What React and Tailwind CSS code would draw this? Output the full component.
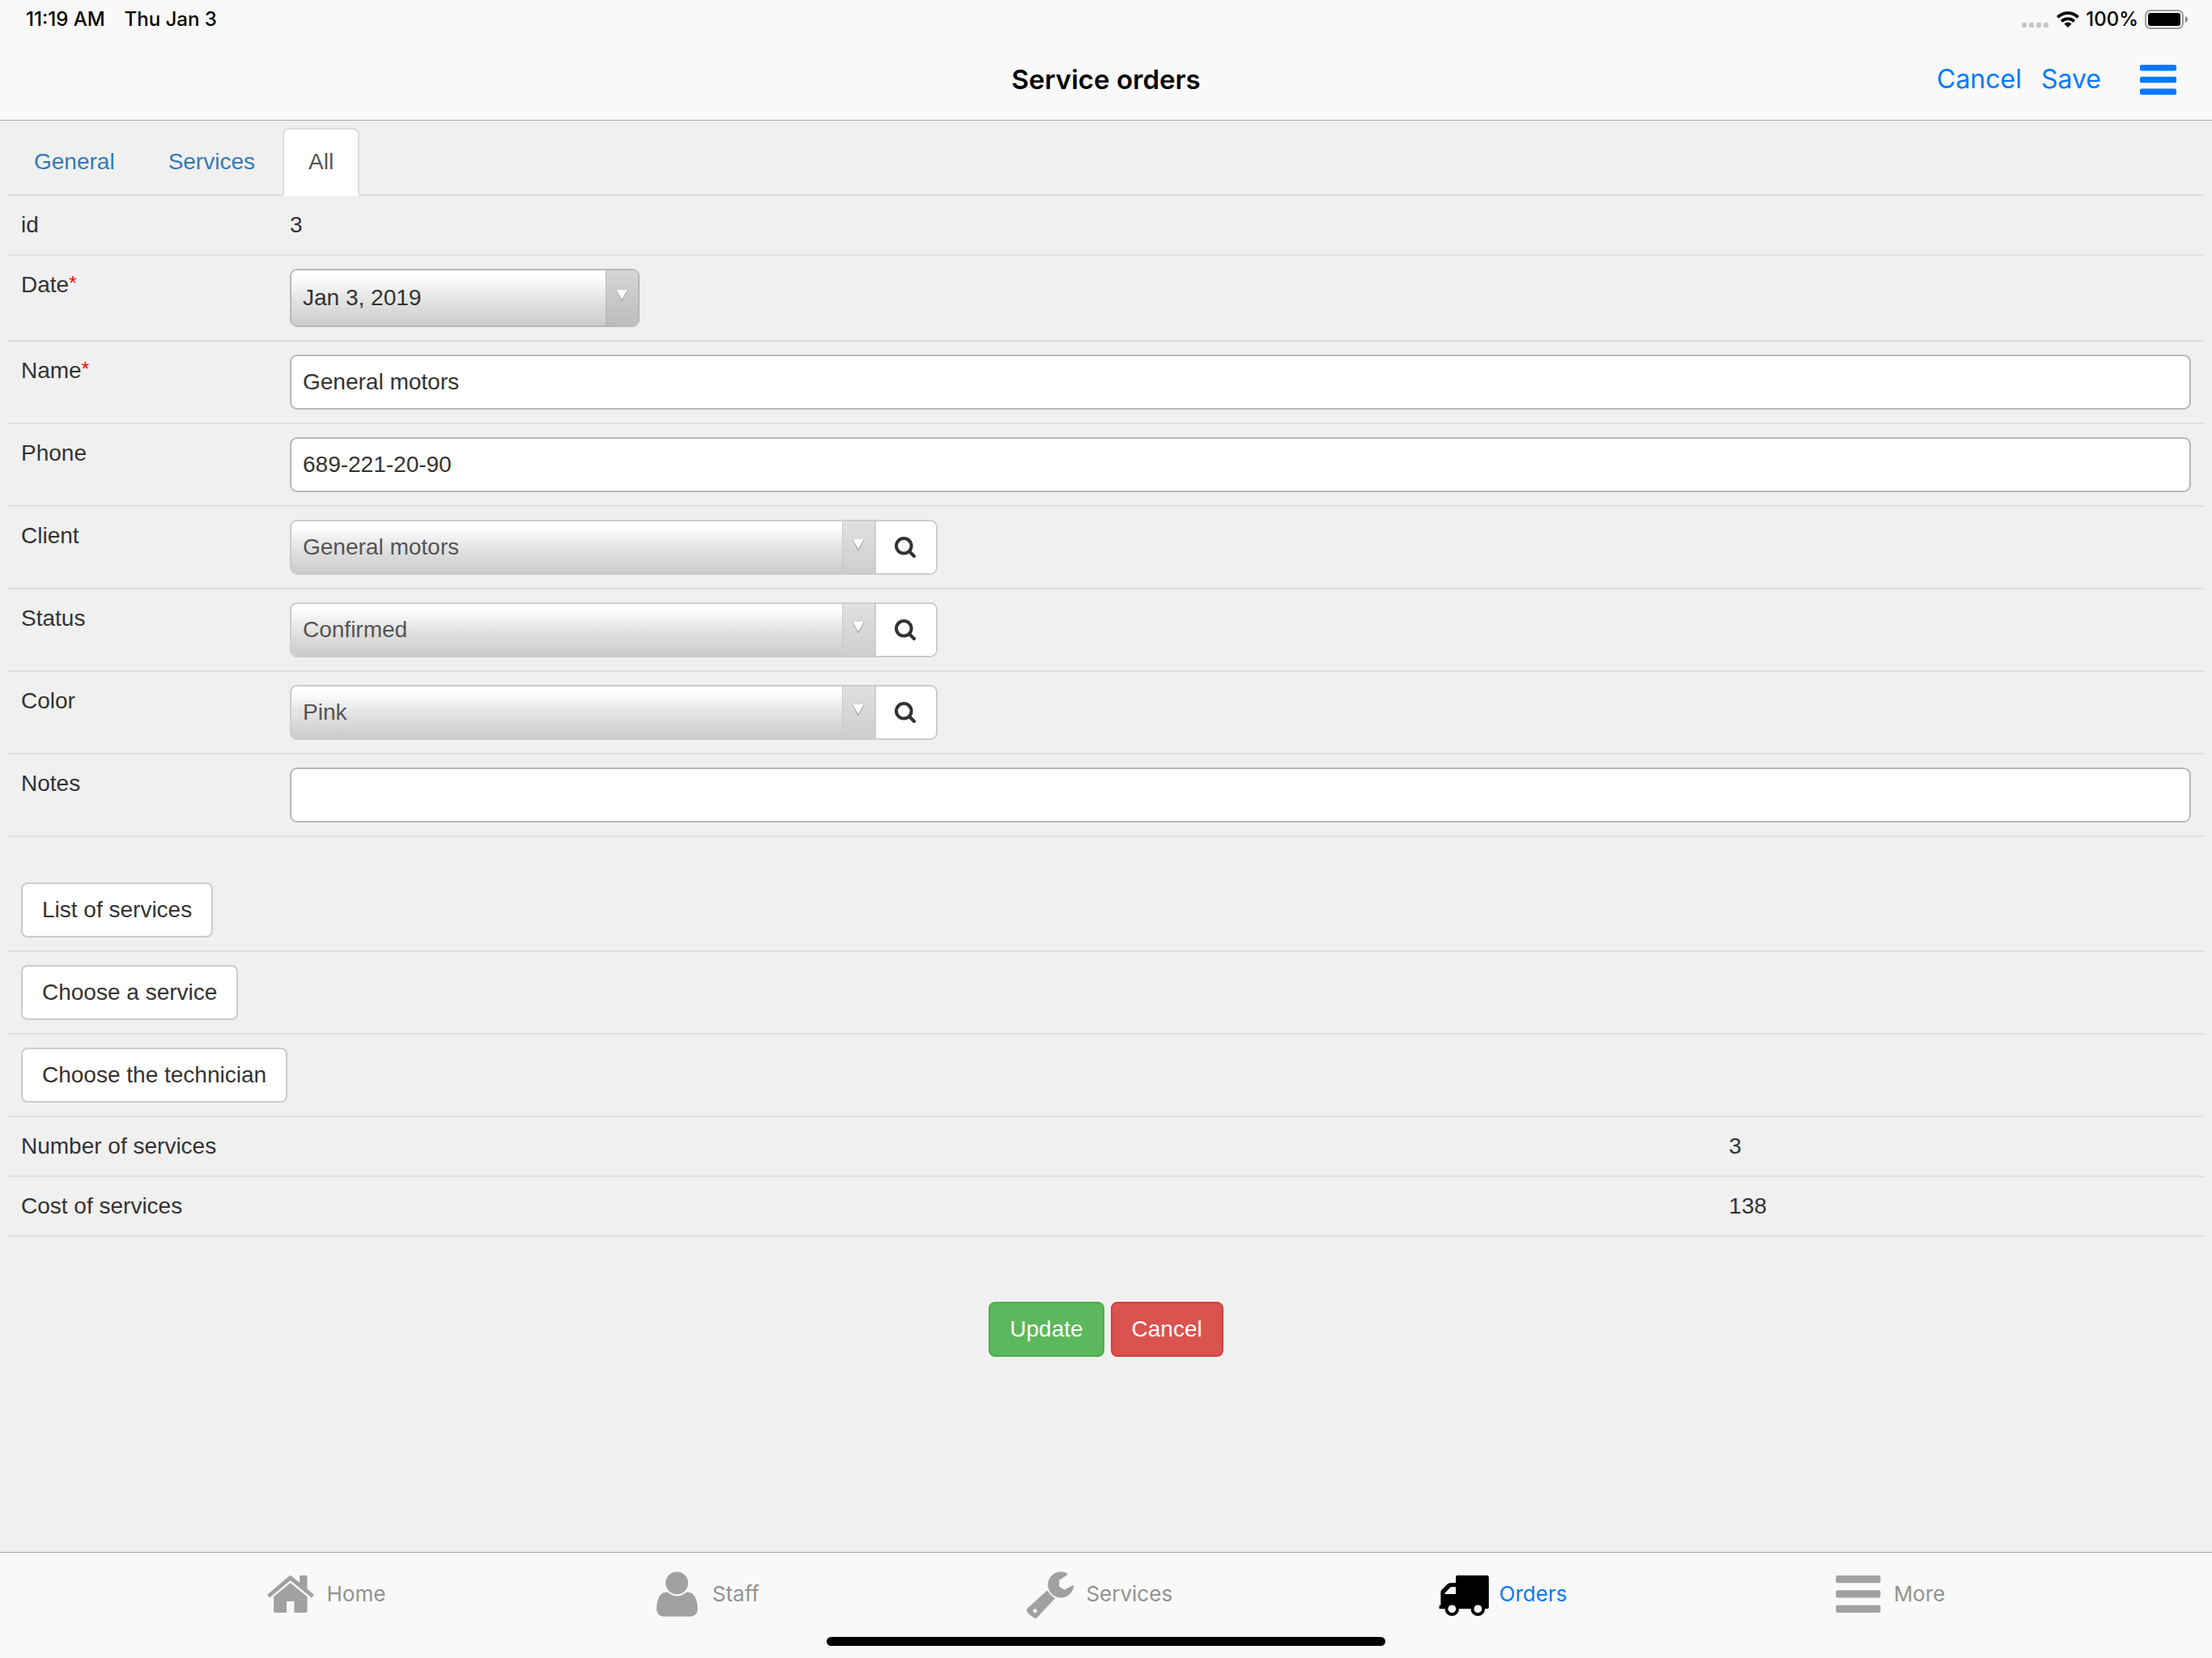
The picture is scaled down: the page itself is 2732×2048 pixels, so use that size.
import React, { useState } from "react";

function StatusBar() {
  return (
    <div className="flex h-12 items-center justify-between pl-8 pr-[30px] text-[24px] font-medium leading-7">
      <div className="flex gap-6">
        <span>11:19 AM</span>
        <span>Thu Jan 3</span>
      </div>
      <div className="flex items-center gap-2">
        <svg className="mr-0.5 h-5 w-[33px]" viewBox="0 0 33 20" fill="#c7c7c7">
          <rect x="0" y="14" width="6" height="6" rx="1.5" />
          <rect x="9" y="14" width="6" height="6" rx="1.5" />
          <rect x="18" y="14" width="6" height="6" rx="1.5" />
          <rect x="27" y="14" width="6" height="6" rx="1.5" />
        </svg>
        <svg className="h-5 w-7" viewBox="0 0 28 20" fill="none" stroke="#000">
          <path d="M1.3 7.3a18 18 0 0 1 25.4 0" strokeWidth="3.8" />
          <path d="M6.1 12.4a11.2 11.2 0 0 1 15.8 0" strokeWidth="3.8" />
          <path d="M9.5 15.5a6.3 6.3 0 0 1 9 0L14 20z" fill="#000" stroke="none" />
        </svg>
        <span>100%</span>
        <svg className="h-6 w-[53px]" viewBox="0 0 53 24">
          <rect x="1" y="1" width="46" height="22" rx="6" fill="none" stroke="#9b9b9b" strokeWidth="2" />
          <rect x="4" y="4" width="40" height="16" rx="3" fill="#000" />
          <path d="M50 8c4 1.500 4 6.500 0 8z" fill="#8a8a8a" />
        </svg>
      </div>
    </div>
  );
}

function Header() {
  return (
    <header className="border-b border-[#a7a7a9] bg-[#f9f9f9] font-['Inter',sans-serif] text-black">
      <StatusBar />
      <div className="grid h-[100px] grid-cols-3 items-center px-11 text-[32px] leading-10">
        <h1 className="col-start-2 text-center text-[33px] font-semibold">Service orders</h1>
        <div className="flex items-center justify-end text-[#007aff]">
          <button type="button">Cancel</button>
          <button type="button" className="ml-6">Save</button>
          <button type="button" aria-label="Menu" className="ml-12">
            <svg className="h-[37px] w-[45px]" viewBox="0 0 45 37" fill="currentColor">
              <rect width="45" height="7.500" rx="2" />
              <rect y="14.800" width="45" height="7.500" rx="2" />
              <rect y="29.500" width="45" height="7.500" rx="2" />
            </svg>
          </button>
        </div>
      </div>
    </header>
  );
}

function Tabs({ active, onChange }) {
  return (
    <div role="tablist" className="flex gap-0.5 border-b-2 border-[#ddd]">
      {["General", "Services", "All"].map((tab) => (
        <button
          key={tab}
          type="button"
          role="tab"
          aria-selected={tab === active}
          onClick={() => onChange(tab)}
          className={
            tab === active
              ? "-mb-0.5 rounded-t-lg border-2 border-[#ddd] border-b-white bg-white px-[30px] py-5 text-[#555]"
              : "-mb-0.5 rounded-t-lg border-2 border-transparent border-b-[#ddd] px-[30px] py-5 text-[#337ab7]"
          }
        >
          {tab}
        </button>
      ))}
    </div>
  );
}

function Row({ id, label, required, children }) {
  return (
    <div className="grid grid-cols-[332px_1fr] items-start border-b-2 border-[#e0e0e0] p-4">
      <label htmlFor={id}>
        {label}
        {required && (
          <span className="align-[3px] text-[24px] leading-none text-[#ff0000]">*</span>
        )}
      </label>
      {children}
    </div>
  );
}

function TextField({ id, value }) {
  return (
    <input
      id={id}
      type="text"
      defaultValue={value}
      className="h-[68px] w-full rounded-[9px] border-2 border-[#b8b8b8] bg-white px-[14px] outline-none"
    />
  );
}

function Arrow() {
  return (
    <svg className="h-[14px] w-4" viewBox="0 0 16 14">
      <path d="M1 0 8 13 15 0" fill="none" stroke="#8a8a8a" strokeWidth="1.200" />
      <path d="M1 0h14L8 12.500z" fill="#fff" />
    </svg>
  );
}

function DateField({ id, value }) {
  return (
    <div className="relative h-[72px] w-[432px] overflow-hidden rounded-[9px] border-2 border-[#b8b8b8]">
      <select
        id={id}
        className="h-full w-full appearance-none bg-linear-to-b from-white from-10% via-[#e6e6e6] via-50% to-[#cbcbcb] px-[14px] outline-none"
      >
        <option>{value}</option>
      </select>
      <span className="pointer-events-none absolute inset-y-0 right-0 flex w-10 justify-center border-l border-[#b5b5b5] bg-linear-to-b from-[#d6d6d6] to-[#bcbcbc] pr-0.5 pt-6">
        <Arrow />
      </span>
    </div>
  );
}

function LookupField({ id, label, value }) {
  return (
    <div className="flex h-[68px] w-[800px] overflow-hidden rounded-[9px] border-2 border-[#ccc]">
      <div className="relative flex-1">
        <select
          id={id}
          className="h-full w-full appearance-none bg-linear-to-b from-white from-10% via-[#e4e4e4] via-50% to-[#cbcbcb] px-[14px] text-[#555] outline-none"
        >
          <option>{value}</option>
        </select>
        <span className="pointer-events-none absolute inset-y-0 right-0 flex w-10 justify-center border-l border-[#c8c8c8] bg-linear-to-b from-[#e0e0e0] to-[#cecece] pr-0.5 pt-[22px]">
          <Arrow />
        </span>
      </div>
      <button
        type="button"
        aria-label={`Find ${label}`}
        className="flex w-[76px] items-center justify-center border-l-2 border-[#ccc] bg-white pr-0.5"
      >
        <svg className="h-[26px] w-[26px]" viewBox="0 0 26 26" fill="none" stroke="#333">
          <circle cx="11.300" cy="11.300" r="9.300" strokeWidth="4" />
          <path d="m18 18 6 6" strokeWidth="4" strokeLinecap="round" />
        </svg>
      </button>
    </div>
  );
}

function ActionRow({ children }) {
  return (
    <div className="border-b-2 border-[#e0e0e0] p-4">
      <button
        type="button"
        className="block rounded-lg border-2 border-[#ccc] bg-white px-6 py-3"
      >
        {children}
      </button>
    </div>
  );
}

function TotalRow({ label, value }) {
  return (
    <div className="grid grid-cols-[7fr_2fr] border-b-2 border-[#e0e0e0] py-4">
      <dt className="pl-4">{label}</dt>
      <dd className="pl-4">{value}</dd>
    </div>
  );
}

const navItems = [
  {
    label: "Home",
    icon: (
      <>
        <path d="M28.300 7.500q1.200-1 2.400 0L41 16V8q0-1 1-1h7.500q1 0 1 1v15.700l7.700 6.500q.8.700.2 1.500l-1.600 2q-.7.800-1.500.2L29.500 13.300 4.700 33.900q-.8.600-1.500-.2l-1.600-2q-.6-.8.200-1.500z" />
        <path d="M29.500 16.300 50.500 33.300V51q0 2-2 2H34.400V39H25v14H11q-2 0-2-2V33.300z" />
      </>
    ),
  },
  {
    label: "Staff",
    icon: (
      <>
        <circle cx="30" cy="16.300" r="13.900" />
        <path d="M16.300 27.800c2 0 3 .2 4.700 1.600a15 15 0 0 0 18.500 0c1.700-1.400 2.700-1.600 4.700-1.600 7 0 11.400 9 11.400 20.500 0 6-3.500 9.400-9.500 9.400H14.500C8.500 57.700 5 54.300 5 48.300c0-11.500 4.300-20.500 11.300-20.500z" />
      </>
    ),
  },
  {
    label: "Services",
    icon: (
      <>
        <path d="M50.800 4.500q2 1 .3 2.100L41.300 12.700v8l6.300 4 9.800-5.300q1.800-.8 1.700 1A16 16 0 1 1 50.800 4.500z" />
        <path
          fillRule="evenodd"
          d="M26.300 25.600q3.500 5.800 9.700 9.700L14.500 58.500q-2.500 2.500-5 .5-5-3-7.500-6.500-2-2.700.2-5zM11.300 48.300a2.400 2.400 0 1 0 .1 0z"
        />
      </>
    ),
  },
  {
    label: "Orders",
    active: true,
    icon: (
      <path
        fillRule="evenodd"
        d="M22 7h36.800q2 0 2 2v37.300q0 2-2 2H56.100a8.800 8.800 0 0 1-17.600 0H24.100a8.800 8.800 0 0 1-17.600 0H.5q-1 0-1-1V45q0-1 1-1h.9V27.700q0-1.500 1-2.700l7-7q1.700-1.700 4-1.700H20V9q0-2 2-2zM20 21.300h-5q-1.300 0-2.200.9L6.800 28.400q-.6.700-.6 1.600H20zM15.300 43.400a4.900 4.900 0 1 0 .1 0zM47.300 43.400a4.900 4.900 0 1 0 .1 0z"
      />
    ),
  },
  {
    label: "More",
    icon: (
      <>
        <rect x="2.500" y="7" width="55" height="9.300" rx="2" />
        <rect x="2.500" y="25.300" width="55" height="9.300" rx="2" />
        <rect x="2.500" y="43.700" width="55" height="9.300" rx="2" />
      </>
    ),
  },
];

function TabBar() {
  return (
    <footer className="h-[131px] border-t border-[#a7a7a9] bg-[#f9f9f9] font-['Inter',sans-serif] text-[26px] leading-[60px]">
      <nav className="mb-0.5 flex h-[102px] items-center justify-evenly">
        {navItems.map((item) => (
          <a
            key={item.label}
            href="#"
            className={
              item.active
                ? "flex items-center gap-[14px] text-[#007aff]"
                : "flex items-center gap-[14px] text-[#929292]"
            }
          >
            <svg
              className="h-[60px] w-[60px] overflow-visible"
              viewBox="0 0 60 60"
              fill={item.active ? "#000" : "#a1a1a1"}
            >
              {item.icon}
            </svg>
            {item.label}
          </a>
        ))}
      </nav>
      <div className="mx-auto h-[11px] w-[690px] rounded-full bg-black"></div>
    </footer>
  );
}

export default function App() {
  const [tab, setTab] = useState("All");

  return (
    <div className="flex min-h-screen flex-col bg-[#f0f0f0] font-['Liberation_Sans',Arial,sans-serif] text-[28px] leading-10 text-[#333]">
      <Header />
      <main className="flex-1 px-[10px] pt-[9px]">
        <Tabs active={tab} onChange={setTab} />
        <form onSubmit={(e) => e.preventDefault()}>
          <Row id="order-id" label="id">
            <output id="order-id">3</output>
          </Row>
          <Row id="date" label="Date" required>
            <DateField id="date" value="Jan 3, 2019" />
          </Row>
          <Row id="name" label="Name" required>
            <TextField id="name" value="General motors" />
          </Row>
          <Row id="phone" label="Phone">
            <TextField id="phone" value="689-221-20-90" />
          </Row>
          <Row id="client" label="Client">
            <LookupField id="client" label="client" value="General motors" />
          </Row>
          <Row id="status" label="Status">
            <LookupField id="status" label="status" value="Confirmed" />
          </Row>
          <Row id="color" label="Color">
            <LookupField id="color" label="color" value="Pink" />
          </Row>
          <Row id="notes" label="Notes">
            <TextField id="notes" value="" />
          </Row>

          <div className="mt-10">
            <ActionRow>List of services</ActionRow>
            <ActionRow>Choose a service</ActionRow>
            <ActionRow>Choose the technician</ActionRow>
          </div>
          <dl>
            <TotalRow label="Number of services" value="3" />
            <TotalRow label="Cost of services" value="138" />
          </dl>

          <div className="mt-20 flex justify-center gap-2 text-white">
            <button
              type="submit"
              className="rounded-lg border-2 border-[#4cae4c] bg-[#5cb85c] px-6 py-3"
            >
              Update
            </button>
            <button
              type="button"
              className="rounded-lg border-2 border-[#d43f3a] bg-[#d9534f] px-6 py-3"
            >
              Cancel
            </button>
          </div>
        </form>
      </main>
      <TabBar />
    </div>
  );
}
